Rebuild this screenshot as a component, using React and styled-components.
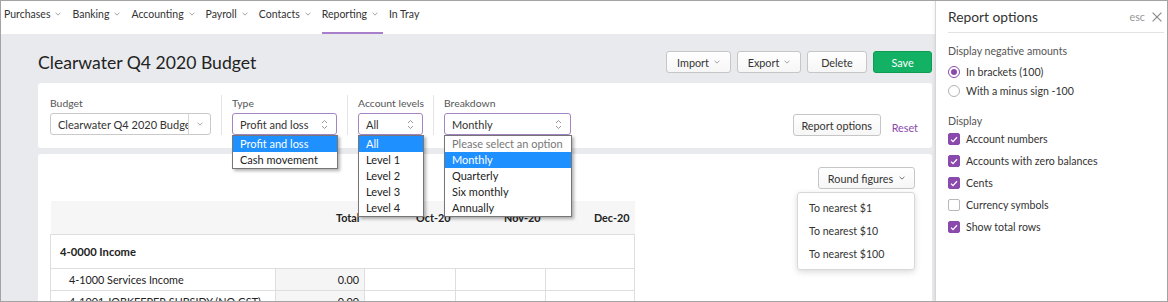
import React from "react";
import styled, { createGlobalStyle } from "styled-components";

const FONT = `Lato, "Noto Sans", sans-serif`;
const PURPLE = "#8a4aad";

const GlobalStyle = createGlobalStyle`
  html, body { margin: 0; padding: 0; background: #fff; }
  body { font-family: ${FONT}; font-size: 10.5px; color: #333; }
  * { box-sizing: border-box; }
`;

const Frame = styled.div`
  width: 1168px;
  height: 302px;
  border: 1px solid #a3a3a3;
  display: flex;
  overflow: hidden;
`;

const Main = styled.div`
  flex: 1;
  min-width: 0;
  background: #e8eaed;
  display: flex;
  flex-direction: column;
  overflow: hidden;
`;

const Nav = styled.nav`
  height: 33px;
  flex: none;
  background: #fff;
  display: flex;
  align-items: stretch;
  padding-left: 3px;
  gap: 6px;
`;

const NavItem = styled.div`
  display: flex;
  align-items: center;
  padding: 0 5px 5px 0;
  border-bottom: 2px solid ${(p) => (p.$active ? "#a97fcb" : "transparent")};
  color: #333;
  font-size: 10.5px;
  white-space: nowrap;
`;

const Chevron = ({ color = "#999", gap = 5 }) => (
  <svg width="6" height="4" viewBox="0 0 6 4" style={{ marginLeft: gap, flex: "none" }}>
    <path d="M0.6 0.8 L3 3.1 L5.4 0.8" fill="none" stroke={color} strokeWidth="0.9" />
  </svg>
);

const UpDown = () => (
  <svg width="7" height="11" viewBox="0 0 7 11" style={{ flex: "none" }}>
    <path d="M1 4 L3.5 1.5 L6 4 M1 7 L3.5 9.5 L6 7" fill="none" stroke="#999" strokeWidth="1" />
  </svg>
);

const Content = styled.div`
  flex: 1;
  display: flex;
  flex-direction: column;
  padding: 0 3px 0 37px;
`;

const TitleRow = styled.div`
  margin-top: 17px;
  height: 22px;
  display: flex;
  align-items: center;
  justify-content: space-between;
`;

const Title = styled.h1`
  margin: 0;
  font-size: 17.6px;
  font-weight: 400;
  color: #222;
`;

const ButtonGroup = styled.div`
  display: flex;
  gap: 6px;
`;

const Button = styled.button`
  height: 22px;
  width: ${(p) => p.$w}px;
  padding: 0;
  display: inline-flex;
  align-items: center;
  justify-content: center;
  font-family: ${FONT};
  font-size: 10.8px;
  border-radius: 3px;
  border: 1px solid ${(p) => (p.$primary ? "#0d9d52" : "#c6c6c6")};
  background: ${(p) => (p.$primary ? "#12b163" : "linear-gradient(#fff, #f6f6f6)")};
  color: ${(p) => (p.$primary ? "#fff" : "#333")};
`;

const FilterCard = styled.div`
  margin-top: 10px;
  height: 65px;
  flex: none;
  background: #fff;
  border-radius: 3px;
  padding: 12px 14px 0 12px;
  display: flex;
  align-items: flex-start;
`;

const Field = styled.div`
  display: flex;
  flex-direction: column;
  gap: 2px;
  ${(p) =>
    p.$sep &&
    `border-left: 1px solid #e4e4e4; margin-left: 10px; padding-left: 10px;`}
  ${(p) => p.$w && `width: ${p.$w + (p.$sep ? 11 : 0)}px;`}
`;

const Label = styled.div`
  line-height: 16px;
  color: #555;
  font-size: 10.4px;
  white-space: nowrap;
`;

const Select = styled.div`
  position: relative;
  width: ${(p) => p.$w}px;
  height: 22px;
  border: 1px solid ${(p) => (p.$focus ? "#a584c6" : "#cacaca")};
  border-radius: 3px;
  display: flex;
  align-items: center;
  justify-content: space-between;
  padding: 0 ${(p) => (p.$split ? 0 : 8)}px 0 7px;
  color: #333;
  font-size: 11px;
  white-space: nowrap;
`;

const SelectText = styled.span`
  overflow: hidden;
  flex: 1;
`;

const SplitArrow = styled.span`
  width: 22px;
  align-self: stretch;
  border-left: 1px solid #d6d6d6;
  display: flex;
  align-items: center;
  justify-content: center;
  & svg { margin-left: 0 !important; }
`;

const OptionList = styled.div`
  position: absolute;
  top: 21px;
  left: -1px;
  right: -2px;
  background: #fff;
  border: 1px solid #767676;
  box-shadow: 2px 2px 3px rgba(0, 0, 0, 0.3);
  z-index: 5;
`;

const Option = styled.div`
  height: 16px;
  line-height: 16px;
  padding-left: 7px;
  font-size: 11px;
  white-space: nowrap;
  background: ${(p) => (p.$sel ? "#1e90ff" : "#fff")};
  color: ${(p) => (p.$sel ? "#fff" : p.$muted ? "#777" : "#222")};
`;

const Spacer = styled.div`
  flex: 1;
`;

const ActionArea = styled.div`
  align-self: flex-end;
  margin-bottom: 12px;
  display: flex;
  align-items: center;
  gap: 11px;
`;

const ResetLink = styled.a`
  color: ${PURPLE};
  font-size: 10.8px;
  margin-top: 4px;
`;

const ReportCard = styled.div`
  margin-top: 6px;
  flex: 1;
  background: #fff;
  border-radius: 3px 3px 0 0;
  padding: 13px 17px 0 12px;
  display: flex;
  flex-direction: column;
`;

const Toolbar = styled.div`
  display: flex;
  justify-content: flex-end;
  position: relative;
  z-index: 4;
`;

const Menu = styled.div`
  position: absolute;
  top: 25px;
  right: 0;
  width: 118px;
  background: #fff;
  border: 1px solid #d8d8d8;
  border-radius: 3px;
  box-shadow: 0 2px 6px rgba(0, 0, 0, 0.15);
  padding: 4px 0 3px;
`;

const MenuItem = styled.div`
  height: 23px;
  line-height: 23px;
  padding-left: 11px;
  color: #333;
  font-size: 10.6px;
`;

const Table = styled.table`
  margin-top: 12px;
  width: 584px;
  table-layout: fixed;
  border-collapse: collapse;
  font-size: 10.8px;
`;

const HeadCell = styled.th`
  height: 33px;
  background: #f6f6f6;
  text-align: right;
  font-weight: 700;
  padding: 0 5px 0 0;
  color: #222;
`;

const Cell = styled.td`
  height: ${(p) => p.$h || 22}px;
  border: 1px solid #dedede;
  padding: 0 5px 0 ${(p) => p.$indent ?? 0}px;
  text-align: ${(p) => (p.$num ? "right" : "left")};
  font-weight: ${(p) => (p.$bold ? 700 : 400)};
  font-size: ${(p) => (p.$bold ? 11.2 : 10.8)}px;
  background: ${(p) => (p.$shade ? "#f5f5f5" : "#fff")};
  white-space: nowrap;
  overflow: hidden;
  color: #222;
`;

const Panel = styled.aside`
  width: 232px;
  flex: none;
  background: #fff;
  border-left: 1px solid #d6d6d6;
  box-shadow: -1px 0 3px rgba(0, 0, 0, 0.06);
  display: flex;
  flex-direction: column;
`;

const PanelHeader = styled.div`
  height: 32px;
  margin: 0 3px 0 12px;
  padding-right: 2px;
  border-bottom: 1px solid #e3e3e3;
  display: flex;
  align-items: center;
  justify-content: space-between;
`;

const PanelTitle = styled.div`
  font-size: 13.8px;
  color: #333;
`;

const Esc = styled.div`
  display: flex;
  align-items: center;
  gap: 7px;
  color: #999;
  font-size: 10.8px;
`;

const PanelBody = styled.div`
  padding-left: 12px;
  display: flex;
  flex-direction: column;
`;

const SectionLabel = styled.div`
  margin-top: ${(p) => p.$mt}px;
  line-height: ${(p) => p.$lh || 16}px;
  color: #555;
  font-size: 10.6px;
`;

const OptionRow = styled.label`
  height: ${(p) => p.$h}px;
  display: flex;
  align-items: center;
  gap: 6px;
  color: #333;
  font-size: 10.6px;
`;

const RadioMark = styled.span`
  width: 12px;
  height: 12px;
  border-radius: 50%;
  border: 1px solid ${(p) => (p.$on ? PURPLE : "#b3b3b3")};
  display: flex;
  align-items: center;
  justify-content: center;
  &::after {
    content: "";
    width: 6px;
    height: 6px;
    border-radius: 50%;
    background: ${(p) => (p.$on ? PURPLE : "transparent")};
  }
`;

const CheckMark = styled.span`
  width: 12px;
  height: 12px;
  border-radius: 2px;
  background: ${(p) => (p.$on ? PURPLE : "#fff")};
  border: 1px solid ${(p) => (p.$on ? PURPLE : "#b8b8b8")};
  display: flex;
  align-items: center;
  justify-content: center;
`;

const Tick = () => (
  <svg width="8" height="7" viewBox="0 0 8 7">
    <path d="M1 3.6 L3 5.6 L7 1.2" fill="none" stroke="#fff" strokeWidth="1.3" />
  </svg>
);

const navItems = ["Purchases", "Banking", "Accounting", "Payroll", "Contacts", "Reporting"];

const checks = [
  ["Account numbers", true],
  ["Accounts with zero balances", true],
  ["Cents", true],
  ["Currency symbols", false],
  ["Show total rows", true],
];

export default function App() {
  return (
    <>
      <GlobalStyle />
      <Frame>
        <Main>
          <Nav>
            {navItems.map((n) => (
              <NavItem key={n} $active={n === "Reporting"}>
                {n}
                <Chevron />
              </NavItem>
            ))}
            <NavItem>In Tray</NavItem>
          </Nav>
          <Content>
            <TitleRow>
              <Title>Clearwater Q4 2020 Budget</Title>
              <ButtonGroup>
                <Button $w={65}>
                  Import <Chevron />
                </Button>
                <Button $w={64}>
                  Export <Chevron />
                </Button>
                <Button $w={60}>Delete</Button>
                <Button $w={59} $primary>
                  Save
                </Button>
              </ButtonGroup>
            </TitleRow>

            <FilterCard>
              <Field>
                <Label>Budget</Label>
                <Select $w={161} $split>
                  <SelectText>Clearwater Q4 2020 Budget</SelectText>
                  <SplitArrow>
                    <Chevron />
                  </SplitArrow>
                </Select>
              </Field>
              <Field $sep>
                <Label>Type</Label>
                <Select $w={105} $focus>
                  <span>Profit and loss</span>
                  <UpDown />
                  <OptionList>
                    <Option $sel>Profit and loss</Option>
                    <Option>Cash movement</Option>
                  </OptionList>
                </Select>
              </Field>
              <Field $sep $w={65}>
                <Label>Account levels</Label>
                <Select $w={65} $focus>
                  <span>All</span>
                  <UpDown />
                  <OptionList>
                    <Option $sel>All</Option>
                    <Option>Level 1</Option>
                    <Option>Level 2</Option>
                    <Option>Level 3</Option>
                    <Option>Level 4</Option>
                  </OptionList>
                </Select>
              </Field>
              <Field $sep>
                <Label>Breakdown</Label>
                <Select $w={127} $focus>
                  <span>Monthly</span>
                  <UpDown />
                  <OptionList>
                    <Option $muted>Please select an option</Option>
                    <Option $sel>Monthly</Option>
                    <Option>Quarterly</Option>
                    <Option>Six monthly</Option>
                    <Option>Annually</Option>
                  </OptionList>
                </Select>
              </Field>
              <Spacer />
              <ActionArea>
                <Button $w={88}>Report options</Button>
                <ResetLink>Reset</ResetLink>
              </ActionArea>
            </FilterCard>

            <ReportCard>
              <Toolbar>
                <Button $w={97}>
                  Round figures <Chevron color="#666" gap={6} />
                </Button>
                <Menu>
                  <MenuItem>To nearest $1</MenuItem>
                  <MenuItem>To nearest $10</MenuItem>
                  <MenuItem>To nearest $100</MenuItem>
                </Menu>
              </Toolbar>
              <Table>
                <colgroup>
                  <col style={{ width: 225 }} />
                  <col style={{ width: 89 }} />
                  <col style={{ width: 91 }} />
                  <col style={{ width: 90 }} />
                  <col style={{ width: 89 }} />
                </colgroup>
                <thead>
                  <tr>
                    <HeadCell />
                    <HeadCell>Total</HeadCell>
                    <HeadCell>Oct-20</HeadCell>
                    <HeadCell>Nov-20</HeadCell>
                    <HeadCell>Dec-20</HeadCell>
                  </tr>
                </thead>
                <tbody>
                  <tr>
                    <Cell colSpan={5} $h={34} $bold $indent={9}>
                      4-0000 Income
                    </Cell>
                  </tr>
                  <tr>
                    <Cell $indent={18}>4-1000 Services Income</Cell>
                    <Cell $num $shade>
                      0.00
                    </Cell>
                    <Cell />
                    <Cell />
                    <Cell />
                  </tr>
                  <tr>
                    <Cell $indent={18}>4-1001 JOBKEEPER SUBSIDY (NO GST)</Cell>
                    <Cell $num $shade>
                      0.00
                    </Cell>
                    <Cell />
                    <Cell />
                    <Cell />
                  </tr>
                </tbody>
              </Table>
            </ReportCard>
          </Content>
        </Main>

        <Panel>
          <PanelHeader>
            <PanelTitle>Report options</PanelTitle>
            <Esc>
              esc
              <svg width="10" height="10" viewBox="0 0 10 10">
                <path d="M0.6 0.6 L9.4 9.4 M9.4 0.6 L0.6 9.4" stroke="#8a8a8a" strokeWidth="1.2" />
              </svg>
            </Esc>
          </PanelHeader>
          <PanelBody>
            <SectionLabel $mt={10}>Display negative amounts</SectionLabel>
            <OptionRow $h={19} style={{ marginTop: 3 }}>
              <RadioMark $on />
              In brackets (100)
            </OptionRow>
            <OptionRow $h={19}>
              <RadioMark />
              With a minus sign -100
            </OptionRow>
            <SectionLabel $mt={14} $lh={14}>
              Display
            </SectionLabel>
            {checks.map(([t, on]) => (
              <OptionRow key={t} $h={22}>
                <CheckMark $on={on}>{on && <Tick />}</CheckMark>
                {t}
              </OptionRow>
            ))}
          </PanelBody>
        </Panel>
      </Frame>
    </>
  );
}
